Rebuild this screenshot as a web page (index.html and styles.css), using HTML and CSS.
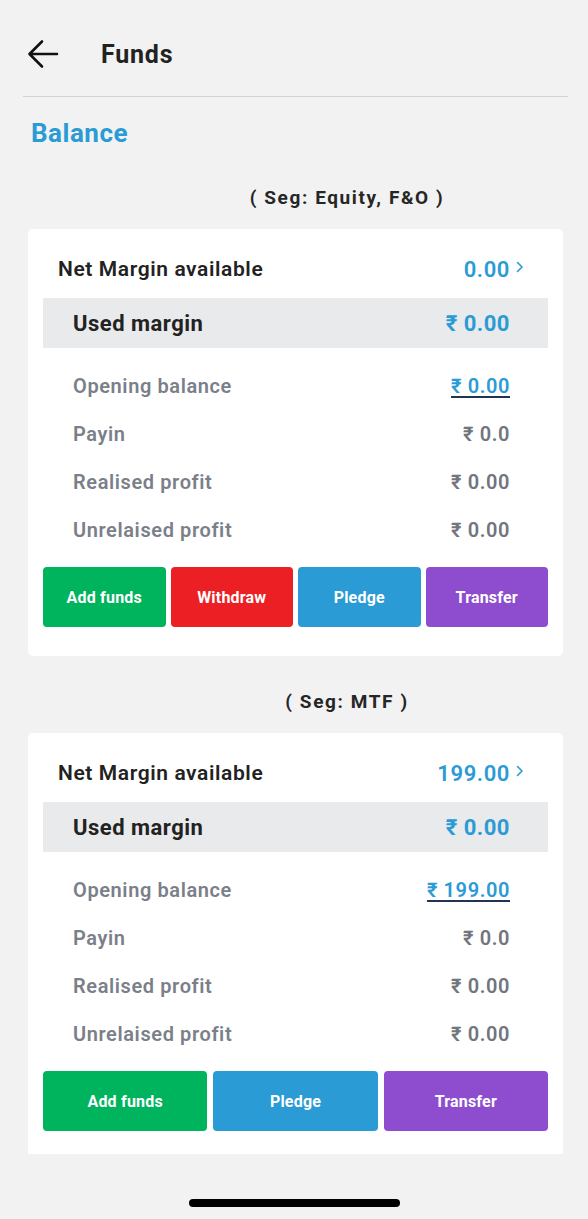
FILE: index.html
```html
<!DOCTYPE html>
<html lang="en">
<head>
<meta charset="utf-8">
<title>Funds</title>
<link rel="stylesheet" href="styles.css">
</head>
<body>
<div class="screen">
  <div class="scroll">
    <header class="topbar">
      <svg class="back" width="32" height="32" viewBox="0 0 32 32" aria-hidden="true">
        <path d="M30 16H3M15 3.5L2.5 16L15 28.5" fill="none" stroke="#111" stroke-width="2.6" stroke-linecap="round" stroke-linejoin="round"/>
      </svg>
      <h1 class="page-title">Funds</h1>
    </header>

    <h2 class="section-title">Balance</h2>

    <div class="seg">( Seg: Equity, F&amp;O )</div>
    <section class="card">
      <div class="net-row">
        <span class="net-label">Net Margin available</span>
        <span class="net-value">0.00
          <svg class="chev" width="8" height="12" viewBox="0 0 8 12" aria-hidden="true"><path d="M1.5 1.5L6 6L1.5 10.5" fill="none" stroke="#2a9bd4" stroke-width="1.6" stroke-linecap="round" stroke-linejoin="round"/></svg>
        </span>
      </div>
      <div class="used-row">
        <span class="used-label">Used margin</span>
        <span class="used-value">₹ 0.00</span>
      </div>
      <div class="rows">
        <div class="row"><span class="row-label">Opening balance</span><span class="row-value link">₹ 0.00</span></div>
        <div class="row"><span class="row-label">Payin</span><span class="row-value">₹ 0.0</span></div>
        <div class="row"><span class="row-label">Realised profit</span><span class="row-value">₹ 0.00</span></div>
        <div class="row"><span class="row-label">Unrelaised profit</span><span class="row-value">₹ 0.00</span></div>
      </div>
      <div class="actions four">
        <button class="btn green">Add funds</button>
        <button class="btn red">Withdraw</button>
        <button class="btn blue">Pledge</button>
        <button class="btn purple">Transfer</button>
      </div>
    </section>

    <div class="seg">( Seg: MTF )</div>
    <section class="card">
      <div class="net-row">
        <span class="net-label">Net Margin available</span>
        <span class="net-value">199.00
          <svg class="chev" width="8" height="12" viewBox="0 0 8 12" aria-hidden="true"><path d="M1.5 1.5L6 6L1.5 10.5" fill="none" stroke="#2a9bd4" stroke-width="1.6" stroke-linecap="round" stroke-linejoin="round"/></svg>
        </span>
      </div>
      <div class="used-row">
        <span class="used-label">Used margin</span>
        <span class="used-value">₹ 0.00</span>
      </div>
      <div class="rows">
        <div class="row"><span class="row-label">Opening balance</span><span class="row-value link">₹ 199.00</span></div>
        <div class="row"><span class="row-label">Payin</span><span class="row-value">₹ 0.0</span></div>
        <div class="row"><span class="row-label">Realised profit</span><span class="row-value">₹ 0.00</span></div>
        <div class="row"><span class="row-label">Unrelaised profit</span><span class="row-value">₹ 0.00</span></div>
      </div>
      <div class="actions three">
        <button class="btn green">Add funds</button>
        <button class="btn blue">Pledge</button>
        <button class="btn purple">Transfer</button>
      </div>
    </section>
  </div>
  <footer class="home-area">
    <div class="home-indicator"></div>
  </footer>
</div>
</body>
</html>
```

FILE: styles.css
```css
* { box-sizing: border-box; }

html, body {
  margin: 0;
  padding: 0;
  background: #f2f2f2;
}

body {
  font-family: Roboto, "Noto Sans", "DejaVu Sans", sans-serif;
  color: #222;
}

.screen {
  width: 588px;
  height: 1219px;
  display: flex;
  flex-direction: column;
}

.scroll {
  height: 1154px;
  overflow: hidden;
  flex: none;
}

.topbar {
  height: 97px;
  margin: 0 20px 0 23px;
  padding: 12px 0 0 4px;
  display: flex;
  align-items: center;
  border-bottom: 1px solid #d4d4d4;
}

.back {
  display: block;
  flex: none;
}

.page-title {
  margin: 0 0 0 42px;
  font-size: 25px;
  font-weight: 700;
  color: #222;
  letter-spacing: 0.8px;
}

.section-title {
  margin: 0;
  height: 72px;
  display: flex;
  align-items: center;
  padding-left: 31px;
  font-size: 26px;
  font-weight: 700;
  letter-spacing: 0.5px;
  color: #2a9bd4;
}

.seg {
  height: 56px;
  margin-bottom: 4px;
  padding-left: 106px;
  display: flex;
  align-items: center;
  justify-content: center;
  font-size: 19px;
  font-weight: 700;
  letter-spacing: 1.6px;
  color: #262626;
}

.card {
  margin: 0 25px 17px 28px;
  padding: 11px 15px 29px;
  background: #fff;
  border-radius: 5px;
}

.net-row {
  height: 58px;
  display: flex;
  align-items: center;
  justify-content: space-between;
  padding: 0 24px 0 15px;
}

.net-label {
  font-size: 21px;
  font-weight: 600;
  letter-spacing: 0.6px;
  color: #222;
}

.net-value {
  display: flex;
  align-items: center;
  gap: 6px;
  font-size: 22px;
  font-weight: 600;
  letter-spacing: 0.6px;
  color: #2a9bd4;
}

.chev { display: block; margin-top: -4px; }

.used-row {
  height: 50px;
  background: #e9eaec;
  display: flex;
  align-items: center;
  justify-content: space-between;
  padding: 0 38px 0 30px;
}

.used-label {
  font-size: 22px;
  font-weight: 700;
  letter-spacing: 0.5px;
  color: #222;
}

.used-value {
  font-size: 22px;
  font-weight: 700;
  letter-spacing: 0.5px;
  color: #2a9bd4;
}

.rows {
  margin-top: 14px;
  padding: 0 38px 0 30px;
}

.row {
  height: 48px;
  display: flex;
  align-items: center;
  justify-content: space-between;
}

.row-label {
  font-size: 20px;
  font-weight: 600;
  letter-spacing: 0.6px;
  color: #7b7f89;
}

.row-value {
  font-size: 20px;
  font-weight: 600;
  letter-spacing: 0.6px;
  color: #71757e;
}

.row-value.link {
  color: #2a9bd4;
  text-decoration: underline;
  text-decoration-color: #1f3550;
  text-underline-offset: 3px;
}

.actions {
  margin-top: 13px;
  display: flex;
  gap: 5px;
}

.actions.three { gap: 6px; }

.btn {
  flex: 1;
  height: 60px;
  border: 0;
  border-radius: 4px;
  font-family: inherit;
  font-size: 16px;
  font-weight: 700;
  letter-spacing: 0.2px;
  color: #fff;
}

.green { background: #00b35d; }
.red { background: #ec2024; }
.blue { background: #2a9bd4; }
.purple { background: #8e4cce; }

.home-area {
  flex: 1;
  padding-top: 13px;
  display: flex;
  flex-direction: column;
}

.home-indicator {
  margin: 32px auto 0;
  width: 211px;
  height: 8px;
  border-radius: 4px;
  background: #000;
}
```
